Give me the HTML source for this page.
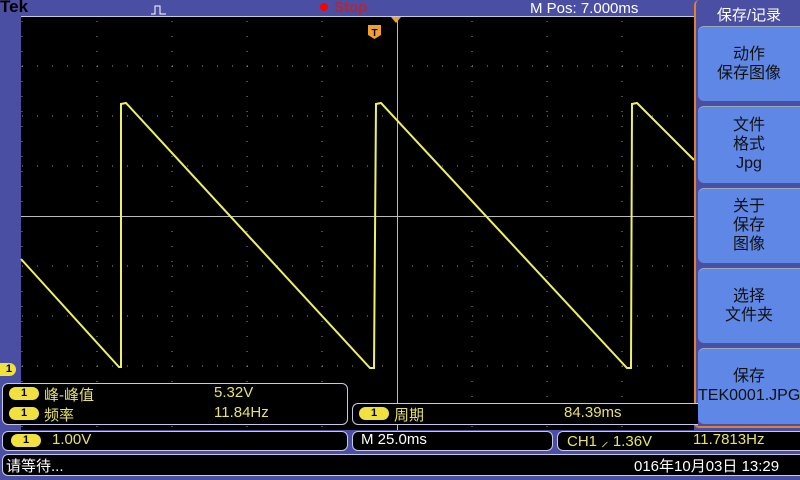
<!DOCTYPE html><html><head><meta charset="utf-8"><style>
body{margin:0;width:800px;height:480px;overflow:hidden;background:#4b4fa3;font-family:"Liberation Sans","Noto Sans CJK SC",sans-serif;position:relative}
.a{position:absolute}
.box{position:absolute;background:#000;border:1.5px solid #c8c8e8;border-radius:6px;box-sizing:border-box}
.y{color:#e8e070}
.w{color:#fff}
.pill{position:absolute;width:30px;height:13px;border-radius:7px;background:#f0e040;color:#000;font-size:11px;text-align:center;line-height:13px;font-weight:bold}
.btn{position:absolute;left:698px;width:102px;background:#5f87e6;border-radius:6px 0 0 6px;color:#111;font-size:16px;text-align:center;display:flex;flex-direction:column;justify-content:center;line-height:19px;box-shadow:inset 0 1px 0 #9ab}
</style></head><body>
<div class="a" style="left:0;top:-3px;font-size:17px;font-weight:bold;color:#000">Tek</div>
<svg class="a" style="left:150px;top:4px" width="20" height="12"><path d="M1 10H5V2H10V10H16" stroke="#fff" fill="none" stroke-width="1"/></svg>
<div class="a" style="left:320px;top:3px;width:8px;height:8px;border-radius:50%;background:#f00"></div>
<div class="a" style="left:334px;top:-1px;font-size:15px;color:#b02838;font-weight:bold">Stop</div>
<div class="a" style="left:530px;top:0;font-size:15px;color:#fff">M Pos: 7.000ms</div>
<svg class="a" style="left:0;top:0" width="800" height="480">
<rect x="21" y="16" width="673" height="414" fill="#000"/>
<line x1="21" y1="16.5" x2="694" y2="16.5" stroke="#c8c8e0"/>
<g stroke="#999" stroke-dasharray="1 14" stroke-width="1">
<line x1="22" y1="21" x2="22" y2="430"/><line x1="97" y1="21" x2="97" y2="430"/><line x1="172" y1="21" x2="172" y2="430"/><line x1="247" y1="21" x2="247" y2="430"/><line x1="322" y1="21" x2="322" y2="430"/><line x1="472" y1="21" x2="472" y2="430"/><line x1="547" y1="21" x2="547" y2="430"/><line x1="622" y1="21" x2="622" y2="430"/>
</g>
<g stroke="#999" stroke-dasharray="1 14" stroke-width="1">
<line x1="22" y1="66" x2="694" y2="66"/><line x1="22" y1="116" x2="694" y2="116"/><line x1="22" y1="166" x2="694" y2="166"/><line x1="22" y1="266" x2="694" y2="266"/><line x1="22" y1="316" x2="694" y2="316"/><line x1="22" y1="366" x2="694" y2="366"/>
</g>
<line x1="21" y1="216.5" x2="694" y2="216.5" stroke="#bbb"/>
<line x1="397.5" y1="17" x2="397.5" y2="430" stroke="#bbb"/>
<polyline points="21,259 119,367 121,367 121,104 126,103 370,368 374,368 376,104 381,103 627,368 631,368 632,104 637,103 694,160" fill="none" stroke="#f0f060" stroke-width="2"/>
<path d="M391 17H401L396 23Z" fill="#f0a030"/>
<path d="M368 25h13v10l-6.5 4l-6.5-4z" fill="#f0a030"/>
<text x="374.5" y="36" font-size="10" font-weight="bold" text-anchor="middle" fill="#000" font-family="Liberation Sans">T</text>
</svg>
<div class="pill" style="left:-14px;top:363px;width:30px;text-align:right;padding-right:4px;box-sizing:border-box">1</div>
<div class="a" style="left:694px;top:0;width:106px;height:428px;background:#4b4fa3;border-left:2px solid #e08030;border-bottom:2px solid #e08030;border-radius:5px 0 0 5px;box-sizing:border-box"></div>
<div class="a w" style="left:698px;top:4px;width:102px;text-align:center;font-size:15px">保存/记录</div>
<div class="btn" style="top:26px;height:75px">动作<br>保存图像</div>
<div class="btn" style="top:106px;height:77px">文件<br>格式<br>Jpg</div>
<div class="btn" style="top:188px;height:75px">关于<br>保存<br>图像</div>
<div class="btn" style="top:268px;height:75px">选择<br>文件夹</div>
<div class="btn" style="top:348px;height:76px">保存<br>TEK0001.JPG</div>
<div class="box" style="left:2px;top:383px;width:346px;height:42px"></div>
<div class="pill" style="left:9px;top:387px">1</div>
<div class="a y" style="left:44px;top:384px;font-size:15px">峰-峰值</div>
<div class="a y" style="left:214px;top:384px;font-size:15px">5.32V</div>
<div class="pill" style="left:9px;top:407px">1</div>
<div class="a y" style="left:44px;top:404px;font-size:15px">频率</div>
<div class="a y" style="left:214px;top:404px;font-size:15px">11.84Hz</div>
<div class="box" style="left:352px;top:403px;width:346px;height:22px;border-right:none;border-radius:6px 0 0 6px"></div>
<div class="pill" style="left:359px;top:407px">1</div>
<div class="a y" style="left:394px;top:404px;font-size:15px">周期</div>
<div class="a y" style="left:564px;top:404px;font-size:15px">84.39ms</div>
<div class="box" style="left:2px;top:431px;width:346px;height:20px"></div>
<div class="pill" style="left:11px;top:434px">1</div>
<div class="a y" style="left:52px;top:431px;font-size:15px">1.00V</div>
<div class="box" style="left:352px;top:431px;width:201px;height:20px"></div>
<div class="a w" style="left:361px;top:431px;font-size:15px">M 25.0ms</div>
<div class="box" style="left:557px;top:431px;width:243px;height:20px;border-right:none;border-radius:6px 0 0 6px"></div>
<div class="a y" style="left:567px;top:431px;font-size:15px">CH1 ⸝ 1.36V</div>
<div class="a y" style="left:693px;top:431px;font-size:15px">11.7813Hz</div>
<div class="box" style="left:2px;top:454px;width:798px;height:22px;border-right:none;border-radius:6px 0 0 6px"></div>
<div class="a w" style="left:6px;top:455px;font-size:15px">请等待...</div>
<div class="a w" style="left:634px;top:455px;font-size:15px">016年10月03日 13:29</div>
</body></html>
